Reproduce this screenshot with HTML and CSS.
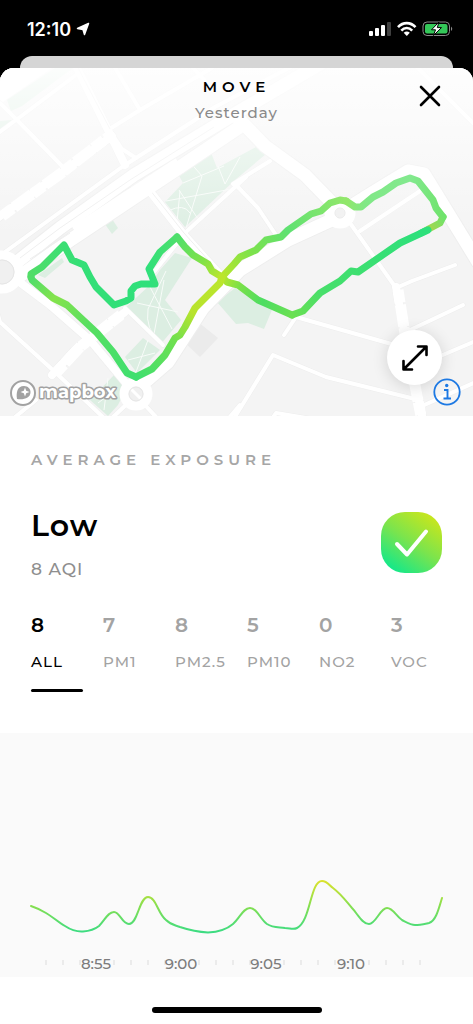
FILE: index.html
```html
<!DOCTYPE html>
<html lang="en">
	<head>
		<meta charset="UTF-8"/>
		<meta name="viewport" content="width=device-width, initial-scale=1">
		<title>Move</title>
		<link rel="stylesheet" href="styles.css">
	</head>
	<body>
		<header class="status">
			<div class="clock">
				<span>12:10</span>
				<svg width="14" height="14" viewBox="0 0 14 14"><path d="M12.500 1.500L1.500 6.500L7 7.500L8.500 12.500Z" fill="#fff" stroke="#fff" stroke-width="1.500" stroke-linejoin="round"/></svg>
			</div>
			<svg width="86" height="18" viewBox="0 0 86 18">
				<g fill="#fff">
					<rect x="0" y="11" width="4" height="5" rx="1"/>
					<rect x="6" y="8" width="4" height="8" rx="1"/>
					<rect x="12" y="5" width="4" height="11" rx="1"/>
					<rect x="18" y="2" width="4" height="14" rx="1" opacity=".25"/>
				</g>
				<g fill="none" stroke="#fff" stroke-width="2.600">
					<path d="M29 7.200C34 1.800 41.500 1.800 46.500 7.200"/>
					<path d="M32.300 10.600C35.500 7.200 40 7.200 43.200 10.600"/>
				</g>
				<path d="M34.700 12.800Q37.800 10.400 40.800 12.800L37.800 16Z" fill="#fff"/>
				<rect x="54" y="2" width="26.500" height="13.500" rx="4" fill="none" stroke="#8a8a8a"/>
				<rect x="56" y="4" width="22.500" height="9.500" rx="2" fill="#34c759"/>
				<path d="M82 6.500Q84.500 8.800 82 11Z" fill="#8a8a8a"/>
				<path d="M70 2L62.500 9.800H66.500L64.500 15.500L72.500 7.600H68.300Z" fill="#fff" stroke="#000" stroke-width="1"/>
			</svg>
		</header>
		<div class="back-sheet"></div>
		<main class="sheet">
			<section class="map">
				<svg class="map-canvas" viewBox="0 68 473 348" preserveAspectRatio="xMidYMid slice" role="img" aria-label="Route map">
					<defs>
						<linearGradient id="fade" x1="0" y1="0" x2="0" y2="1">
							<stop offset="0" stop-color="#fff" stop-opacity=".9"/>
							<stop offset="1" stop-color="#fff" stop-opacity="0"/>
						</linearGradient>
						<linearGradient id="r1" gradientUnits="userSpaceOnUse" x1="31" y1="277" x2="177" y2="237">
							<stop offset="0" stop-color="#52dd68"/><stop offset=".35" stop-color="#33df77"/><stop offset=".75" stop-color="#2fe07b"/><stop offset="1" stop-color="#4fdf6c"/>
						</linearGradient>
						<linearGradient id="r2" gradientUnits="userSpaceOnUse" x1="177" y1="237" x2="222" y2="277">
							<stop offset="0" stop-color="#4fdf6c"/><stop offset=".6" stop-color="#82e246"/><stop offset="1" stop-color="#bbe62b"/>
						</linearGradient>
						<linearGradient id="r3" gradientUnits="userSpaceOnUse" x1="222" y1="277" x2="292" y2="315">
							<stop offset="0" stop-color="#bbe62b"/><stop offset=".25" stop-color="#7ae048"/><stop offset=".6" stop-color="#4cdd62"/><stop offset="1" stop-color="#6be052"/>
						</linearGradient>
						<linearGradient id="r4" gradientUnits="userSpaceOnUse" x1="292" y1="315" x2="421" y2="233">
							<stop offset="0" stop-color="#6be052"/><stop offset=".25" stop-color="#47df6b"/><stop offset="1" stop-color="#2de07b"/>
						</linearGradient>
						<linearGradient id="r5" gradientUnits="userSpaceOnUse" x1="424" y1="232" x2="443" y2="217">
							<stop offset="0" stop-color="#2de07b"/><stop offset=".3" stop-color="#a4d64f"/><stop offset="1" stop-color="#6fe36c"/>
						</linearGradient>
						<linearGradient id="r6" gradientUnits="userSpaceOnUse" x1="443" y1="217" x2="346" y2="201">
							<stop offset="0" stop-color="#6fe36c"/><stop offset=".4" stop-color="#83e98f"/><stop offset=".8" stop-color="#80e886"/><stop offset="1" stop-color="#92e76b"/>
						</linearGradient>
						<linearGradient id="r7" gradientUnits="userSpaceOnUse" x1="346" y1="201" x2="222" y2="277">
							<stop offset="0" stop-color="#92e76b"/><stop offset=".45" stop-color="#5fe172"/><stop offset=".75" stop-color="#7ee24a"/><stop offset="1" stop-color="#bbe62b"/>
						</linearGradient>
						<linearGradient id="r8" gradientUnits="userSpaceOnUse" x1="222" y1="277" x2="136" y2="377">
							<stop offset="0" stop-color="#bbe62b"/><stop offset=".35" stop-color="#b8e32d"/><stop offset=".6" stop-color="#6fe050"/><stop offset="1" stop-color="#3fdf6f"/>
						</linearGradient>
						<linearGradient id="r9" gradientUnits="userSpaceOnUse" x1="136" y1="377" x2="32" y2="280">
							<stop offset="0" stop-color="#3fdf6f"/><stop offset=".5" stop-color="#58df60"/><stop offset=".8" stop-color="#85e34c"/><stop offset="1" stop-color="#52dd68"/>
						</linearGradient>
						<g id="wide">
							<path d="M12 266L60 228L134 175L238 112L320 64"/>
							<path d="M20 276L72 239L183 165L238 128"/>
							<path d="M236 116L265 146L305 175L340 211"/>
							<path d="M340 213L372 193L408 171L424 174L440 200L478 262"/>
							<path d="M336 218L288 240L240 270L203 308L168 362L138 388"/>
						</g>
						<g id="medium">
							<path d="M14 278L50 305L90 340L130 388"/>
							<path d="M-4 219L60 174L112 136"/>
							<path d="M52 375L75 350L125 312"/>
							<path d="M396 287L405 335L423 420"/>
							<path d="M145 185L184 235L222 277"/>
							<path d="M74 62L107 128L125 165"/>
						</g>
						<g id="thin">
							<path d="M5 252L122 167L215 107L300 62"/>
							<path d="M112 134L122 149L136 158"/>
							<path d="M114 66L140 110"/>
							<path d="M108 130L140 110L212 68"/>
							<path d="M193 68L208 84"/>
							<path d="M0 103L18 121L62 166"/>
							<path d="M-3 134L20 117L80 72"/>
							<path d="M246 177L186 232L150 277"/>
							<path d="M233 184L270 161"/>
							<path d="M236 185L258 208L276 235"/>
							<path d="M360 231L420 191"/>
							<path d="M350 223L396 288L412 281L455 265"/>
							<path d="M408 331L463 305"/>
							<path d="M438 357L478 340"/>
							<path d="M422 406L478 381"/>
							<path d="M284 335L296 317L395 345"/>
							<path d="M233 420L273 355L326 377L415 399"/>
							<path d="M270 422L276 413L312 419"/>
							<path d="M-5 304L0 322L55 372L106 420"/>
							<path d="M125 308L163 345"/>
							<path d="M14 418L36 400"/>
							<path d="M112 418L128 403"/>
							<path d="M144 404L158 419"/>
							<path d="M229 418L240 405"/>
							<path d="M418 68L476 126"/>
						</g>
					</defs>
					<rect y="68" width="473" height="348" fill="#f4f4f4"/>
					<path d="M0 68H52L0 104Z" fill="#fff"/>
					<g fill="#dceee2">
						<path d="M7 100L55 68H73L22 106L11 111Z"/>
						<path d="M0 121L12 120L0 130Z"/>
						<path d="M177 172L210 150L217 168L256 147L266 154L235 180L185 227L165 202L183 183Z"/>
						<path d="M175 253L192 258L165 300L181 320L160 345L125 308L150 285L160 270Z"/>
						<path d="M125 357L143 338L160 350L137 373Z"/>
						<path d="M90 400L117 372L127 387L118 405L108 416Z"/>
						<path d="M217 302L235 288L272 310L264 329L248 323L236 324Z"/>
						<path d="M102 220L110 216L118 228L112 234Z"/>
						<path d="M38 275L62 258L64 262L45 278Z"/>
					</g>
					<path d="M198 322L218 338L200 357L180 338Z" fill="#ebebeb"/>
					<g class="paths">
						<path d="M188 160L202 176L186 228M166 201L232 189M183 183L224 166M218 166L225 184M179 190L198 219M168 211Q184 203 190 213M240 157L225 184M180 191L177 222"/>
						<path d="M164 280L154 334M137 303L178 312M150 287L172 329M166 271L148 309Q145 330 160 341M128 360L155 353M148 340L136 372M98 403L118 388M108 378L104 410"/>
					</g>
					<use href="#thin" class="road thin casing"/>
					<use href="#medium" class="road medium casing"/>
					<use href="#wide" class="road wide casing"/>
					<use href="#thin" class="road thin"/>
					<use href="#medium" class="road medium"/>
					<use href="#wide" class="road wide"/>
					<g fill="none" stroke="#efefef" stroke-width="1">
						<path d="M20 258L60 228L130 180L214 127"/>
						<path d="M30 259L70 233"/>
						<path d="M122 192L131 187M140 181L144 179M100 209L103 207"/>
						<path d="M150 190L184 233L218 271"/>
						<path d="M77 66L110 129"/>
					</g>
					<path class="rail" d="M2 216L60 174L112 134M55 374L80 347L122 314M398 290L405 334L421 416"/>
					<path class="yard" d="M76 233L180 165"/>
					<g fill="#f0f0f0" stroke="#fff">
						<circle cx="2" cy="272" r="17" stroke-width="9"/>
						<circle cx="340" cy="213" r="10" stroke-width="11"/>
						<circle cx="136" cy="394" r="12" stroke-width="9"/>
						<path d="M131 389L141 399" stroke-width="3"/>
					</g>
					<circle cx="2" cy="272" r="12" fill="none" stroke="#e6e6e6"/>
					<circle cx="340" cy="213" r="5" fill="none" stroke="#e6e6e6"/>
					<circle cx="136" cy="394" r="7" fill="none" stroke="#e6e6e6"/>
					<rect y="68" width="473" height="170" fill="url(#fade)"/>
					<g class="route">
						<path stroke="url(#r9)" d="M136 377L127 373L113 352L97 333L67 305L53 298L32 280L31 277"/>
						<path stroke="url(#r1)" d="M31 277L31 274L42 267L50 259L64 245L72 260L84 265L90 277L96 287L114 305L126 301L131 298L131 291L135 286L141 284L155 284L149 269L160 252L177 237"/>
						<path stroke="url(#r2)" d="M177 237L185 247L193 255L208 264L212 271L222 277"/>
						<path stroke="url(#r3)" d="M222 277L227 282L238 285L258 300L292 315"/>
						<path stroke="url(#r6)" d="M443 217L436 208L433 200L418 181L410 178L396 183L383 192L373 197L361 207L355 207L346 201"/>
						<path stroke="url(#r5)" d="M421 233L440 223L443 217"/>
						<path stroke="url(#r4)" d="M292 315L303 311L320 293L340 281L351 271L358 272L400 243L428 230"/>
						<path stroke="url(#r7)" d="M346 201L340 200L330 203L321 211L311 214L288 230L281 237L266 240L256 250L240 257L234 264L222 277"/>
						<path stroke="url(#r8)" d="M222 277L220 283L195 308L185 327L180 335L175 338L165 355L152 369L136 377"/>
					</g>
					<g class="mapbox">
						<circle cx="23" cy="393" r="12" fill="#fff" stroke="#a2a2a2" stroke-width="2"/>
						<path d="M17 399C16 393 17 386 24 386C28 386 30.500 389 30.500 392C30.500 398 24 400 17 399Z" fill="#a2a2a2"/>
						<path d="M25 387.500L26.200 390.800L29.500 392L26.200 393.200L25 396.500L23.800 393.200L20.500 392L23.800 390.800Z" fill="#fff"/>
						<text x="39" y="398">mapbox</text>
					</g>
				</svg>
				<div class="map-title">
					<h1>MOVE</h1>
					<p>Yesterday</p>
				</div>
				<button class="close" aria-label="Close">
					<svg width="24" height="24" viewBox="0 0 24 24"><path d="M3 3L21 21M21 3L3 21" stroke="#000" stroke-width="2.600" stroke-linecap="round"/></svg>
				</button>
				<button class="expand" aria-label="Expand map">
					<svg width="28" height="28" viewBox="0 0 28 28"><path d="M3 25L25 3M17 2.500H25.500V11M2.500 17V25.500H11" fill="none" stroke="#000" stroke-width="2.600" stroke-linecap="round" stroke-linejoin="round"/></svg>
				</button>
				<button class="info" aria-label="Map information">
					<svg width="28" height="28" viewBox="0 0 28 28">
						<circle cx="14" cy="14" r="12.700" fill="none" stroke="#1d79e3" stroke-width="1.800"/>
						<circle cx="13.700" cy="7.500" r="1.700" fill="#1d79e3"/>
						<path d="M11 12H14.500V20.500M10.500 20.500H18" fill="none" stroke="#1d79e3" stroke-width="1.900"/>
					</svg>
				</button>
			</section>
			<section class="exposure">
				<h2>AVERAGE EXPOSURE</h2>
				<div class="level">
					<div>
						<strong>Low</strong>
						<p>8 AQI</p>
					</div>
					<div class="badge">
						<svg width="61" height="61" viewBox="0 0 61 61"><path d="M16 32L26 42.500L45 19.500" fill="none" stroke="#fff" stroke-width="4" stroke-linecap="round" stroke-linejoin="round"/></svg>
					</div>
				</div>
			</section>
			<nav class="tabs">
				<button class="tab active"><b>8</b><span>ALL</span></button>
				<button class="tab"><b>7</b><span>PM1</span></button>
				<button class="tab"><b>8</b><span>PM2.5</span></button>
				<button class="tab"><b>5</b><span>PM10</span></button>
				<button class="tab"><b>0</b><span>NO2</span></button>
				<button class="tab"><b>3</b><span>VOC</span></button>
			</nav>
			<section class="chart">
				<svg viewBox="0 733 473 244" role="img" aria-label="Exposure over time">
					<defs>
						<linearGradient id="heat" gradientUnits="userSpaceOnUse" x1="0" y1="880" x2="0" y2="932">
							<stop offset="0" stop-color="#dde22c"/>
							<stop offset=".5" stop-color="#86df50"/>
							<stop offset="1" stop-color="#3ddc82"/>
						</linearGradient>
					</defs>
					<path class="line" d="M31 906C37 908 41 910 46 913C53 917 58 922 65 926C71 930 76 932 83 931.500C90 931 94 930 99 926C105 920 108 912 114 912C120 912 122 924 129 924C138 924 139 897 148 897C156 897 158 914 166 920C171 925 175 925 180 927C189 930 198 932 208 932.500C218 932 226 930 233 924C240 918 243 908 250 908C257 908 260 919 267 924C273 928 279 927 285 928C290 928 293 930 297 928C311 921 310 881 322 881C327 881 329 885 333 888C341 894 346 901 352 908C357 913 362 924 369 924C376 924 380 908 387 908C393 908 396 916 402 920C406 922 411 925 415 925C420 925 424 924 429 923C436 921 439 908 442 898"/>
					<path class="ticks" d="M46 960V965M63 960V965M80 960V965M114 960V965M131 960V965M148 960V965M165 960V965M199 960V965M216 960V965M233 960V965M250 960V965M284 960V965M301 960V965M318 960V965M335 960V965M369 960V965M386 960V965M403 960V965M420 960V965"/>
					<g class="times">
						<text x="96" y="969">8:55</text>
						<text x="181" y="969">9:00</text>
						<text x="266" y="969">9:05</text>
						<text x="351" y="969">9:10</text>
					</g>
				</svg>
			</section>
			<div class="home"></div>
		</main>
	</body>
</html>
```
FILE: styles.css
```css
* {
	margin: 0;
	padding: 0;
	box-sizing: border-box;
}
body {
	display: flex;
	flex-direction: column;
	min-height: 100vh;
	background: #000;
	color: #000;
	font-family: Montserrat, Inter, sans-serif;
}
button {
	border: 0;
	background: none;
	font: inherit;
	color: inherit;
	cursor: pointer;
}
svg {
	display: block;
}
.status {
	display: flex;
	justify-content: space-between;
	align-items: center;
	height: 56px;
	padding: 2px 18px 0 27px;
	color: #fff;
}
.clock {
	display: flex;
	align-items: center;
	gap: 5px;
	font-family: Inter, sans-serif;
	font-size: 18px;
	font-weight: 600;
}
.back-sheet {
	height: 24px;
	margin: 0 20px -12px;
	border-radius: 12px 12px 0 0;
	background: #d5d5d5;
}
.sheet {
	position: relative;
	display: flex;
	flex-direction: column;
	flex: 1;
	overflow: hidden;
	border-radius: 14px 14px 0 0;
	background: #fff;
}

/* map */
.map {
	position: relative;
	overflow: hidden;
}
.map-canvas {
	width: 100%;
}
.road {
	fill: none;
	stroke: #fff;
	stroke-linecap: round;
	stroke-linejoin: round;
}
.wide {
	stroke-width: 13px;
}
.medium {
	stroke-width: 8px;
}
.thin {
	stroke-width: 4px;
}
.casing {
	stroke: #eee;
}
.wide.casing {
	stroke-width: 15px;
}
.medium.casing {
	stroke-width: 9px;
}
.thin.casing {
	stroke-width: 5px;
}
.rail {
	fill: none;
	stroke: #fff;
	stroke-width: 11px;
	stroke-dasharray: 13 2 22 1;
}
.yard {
	stroke: #fff;
	stroke-width: 16px;
}
.paths {
	fill: none;
	stroke: #f8fcf9;
	stroke-width: 1px;
}
.route {
	fill: none;
	stroke-width: 7px;
	stroke-linecap: round;
	stroke-linejoin: round;
}
.mapbox text {
	fill: #fff;
	stroke: #a2a2a2;
	stroke-width: 3px;
	stroke-linejoin: round;
	paint-order: stroke;
	font-size: 18px;
	font-weight: 700;
}
.map-title {
	position: absolute;
	top: 8px;
	left: 0;
	right: 0;
	text-align: center;
}
.map-title h1 {
	font-size: 15px;
	font-weight: 600;
	line-height: 22px;
	letter-spacing: 5px;
}
.map-title p {
	margin-top: 4px;
	font-size: 15px;
	font-weight: 500;
	line-height: 22px;
	letter-spacing: 1px;
	color: #8a8a8a;
}
.close {
	position: absolute;
	top: 16px;
	right: 31px;
}
.expand {
	position: absolute;
	right: 31px;
	bottom: 31px;
	display: grid;
	place-items: center;
	width: 55px;
	height: 55px;
	border-radius: 50%;
	background: #fff;
	box-shadow: 0 2px 16px rgba(0, 0, 0, 0.14);
}
.info {
	position: absolute;
	right: 12px;
	bottom: 10px;
}

/* average exposure */
.exposure {
	padding: 34px 31px 0;
}
.exposure h2 {
	font-size: 15px;
	font-weight: 600;
	line-height: 20px;
	letter-spacing: 5px;
	color: #a6a6a6;
}
.level {
	display: flex;
	justify-content: space-between;
	align-items: center;
	margin-top: 36px;
}
.level strong {
	display: block;
	font-size: 30px;
	font-weight: 600;
	line-height: 40px;
	letter-spacing: 1px;
}
.level p {
	margin-top: 14px;
	font-size: 17px;
	font-weight: 500;
	line-height: 18px;
	letter-spacing: 1px;
	color: #8e8e8e;
}
.badge {
	border-radius: 24px;
	background: linear-gradient(35deg, #12e88b 10%, #7be44d 50%, #c9e61c 90%);
}
.tabs {
	display: grid;
	grid-template-columns: repeat(6, 1fr);
	padding: 34px 10px 41px 31px;
}
.tab {
	display: flex;
	flex-direction: column;
	align-items: flex-start;
	color: #a3a3a3;
}
.tab b {
	font-size: 20px;
	font-weight: 600;
	line-height: 26px;
}
.tab span {
	margin-top: 12px;
	font-size: 15px;
	font-weight: 500;
	line-height: 24px;
	letter-spacing: 1px;
}
.tab::after {
	content: "";
	width: 52px;
	height: 3px;
	margin-top: 15px;
	border-radius: 2px;
}
.tab.active {
	color: #000;
}
.tab.active::after {
	background: #000;
}

/* chart */
.chart {
	background: #fafafa;
}
.chart svg {
	width: 100%;
}
.line {
	fill: none;
	stroke: url(#heat);
	stroke-width: 2px;
	stroke-linecap: round;
}
.ticks {
	stroke: #dcdcdc;
	stroke-width: 1px;
}
.times {
	fill: #7d7d7d;
	font-size: 15px;
	font-weight: 500;
	text-anchor: middle;
}
.home {
	width: 170px;
	height: 6px;
	margin: auto auto 11px;
	border-radius: 3px;
	background: #000;
}
```
